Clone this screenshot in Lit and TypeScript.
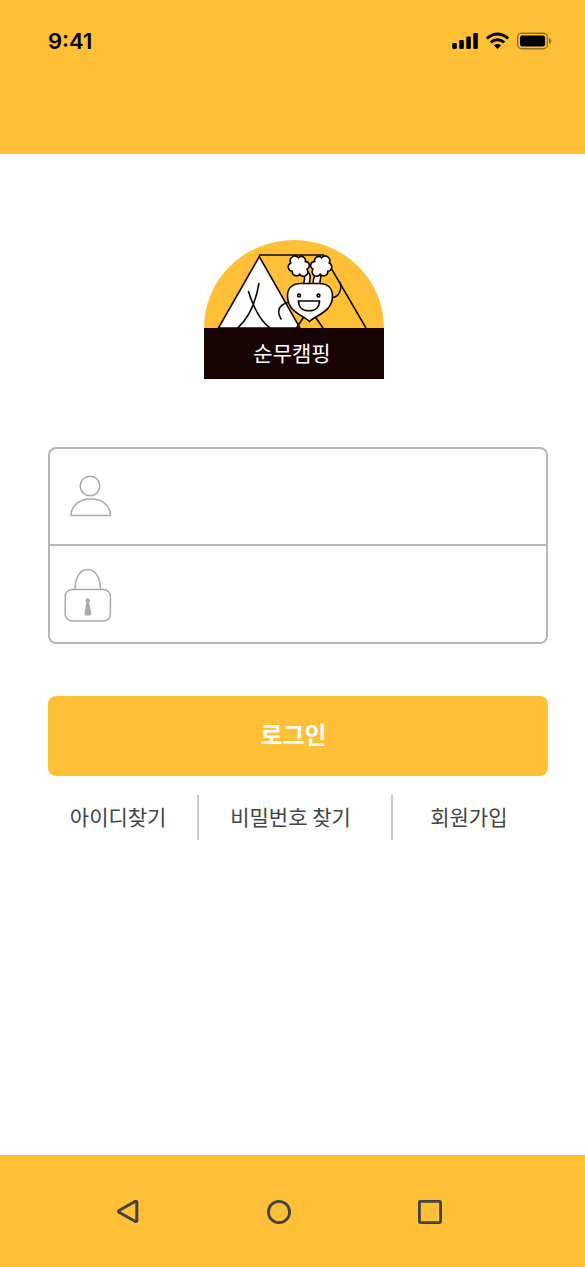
import { LitElement, html, css, svg } from "lit";
import { customElement } from "lit/decorators.js";

const puff = svg`<path d="M-8.200 -3A4.700 4.700 0 0 1 -.5 -8.300A4 4 0 0 1 6.300 -4.600A4.100 4.100 0 0 1 8 3.200A4.300 4.300 0 0 1 .8 8.300A4.300 4.300 0 0 1 -6.800 5.200A4.300 4.300 0 0 1 -8.200 -3Z"/>`;

@customElement("camp-logo")
export class CampLogo extends LitElement {
  static styles = css`
    :host { display: block; width: 180px; }
    .art { display: block; width: 100%; height: 88px; }
    .name {
      margin: 0;
      height: 51px;
      background: #170403;
      color: #fff;
      text-align: center;
      font-size: 21px;
      font-weight: 400;
      line-height: 48px;
      padding-right: 4px;
    }
  `;

  render() {
    return html`
      <svg class="art" viewBox="0 0 180 88" aria-hidden="true" fill="none" stroke="#0b0500" stroke-width="1.6">
        <path d="M0 88A90 88 0 0 1 180 88Z" fill="#ffc038" stroke="none" />
        <path d="M55 15H119.500L162 88" />
        <path d="M14.500 88L55.300 16.500L96 88Z" fill="#fff" />
        <path d="M55 43C52 61 46 77 33.500 88M44.300 51C49 66 55 80 66 88" />
        <path d="M100 76.500L92.500 88M111 76.500L119 88" />
        <path d="M84 62.500C74 65 72.500 72 77.500 79.500M128.500 57.500C135 57 139 48 135.500 41.500" />
        <path d="M99.500 45Q101 39 100.500 33L104 32Q107 35 106 39L105 45ZM109 45Q109 39 111 35L112 32H117Q117 38 115.500 45Z" fill="#fff" />
        <g fill="#fff">
          <g transform="translate(95 26)">${puff}</g>
          <g transform="translate(117 26) scale(-1 1)">${puff}</g>
        </g>
        <path d="M105.500 81.500C99 75 83.500 72 83.500 56C83.500 47.500 89 43.500 97 43.500H115C123 43.500 128.500 47.500 128.500 56C128.500 72 112 75 105.500 81.500Z" fill="#fff" />
        <circle cx="95" cy="55.500" r="1.400" /><circle cx="114.500" cy="55.500" r="1.400" />
        <path d="M94.500 61H115.500C115.500 67 111.500 70.800 105 70.800C98.500 70.800 94.500 67 94.500 61Z" />
      </svg>
      <h1 class="name">순무캠핑</h1>
    `;
  }
}

@customElement("app-root")
export class AppRoot extends LitElement {
  static styles = css`
    * { box-sizing: border-box; }
    :host {
      display: flex;
      flex-direction: column;
      min-height: 100vh;
      background: #fff;
      font-family: "Noto Sans CJK KR", sans-serif;
    }
    svg { display: block; }
    .top { background: #ffc038; height: 154px; padding: 28px 33px 0 48px; }
    .status { display: flex; align-items: center; justify-content: space-between; height: 26px; }
    .time { font: 600 22px/28px Inter, sans-serif; color: #000; }
    .main { flex: 1; padding: 86px 37px 0 48px; }
    .brand { display: flex; justify-content: center; padding-right: 8px; }
    .fields { margin-top: 68px; border: 2px solid #b3b7b5; border-radius: 8px; }
    .field { display: flex; align-items: center; height: 95px; }
    .field + .field { border-top: 2px solid #b3b7b5; height: 98px; }
    .icon { width: 48px; margin-left: 14px; flex: none; }
    .input {
      flex: 1;
      min-width: 0;
      height: 100%;
      border: 0;
      outline: 0;
      background: transparent;
      padding: 0 16px;
      font: inherit;
      font-size: 21px;
      color: #434343;
    }
    .login {
      display: block;
      width: 100%;
      height: 80px;
      margin-top: 52px;
      padding: 0 9px 6px 0;
      border: 0;
      border-radius: 8px;
      background: #ffc038;
      color: #fff;
      font: inherit;
      font-size: 24px;
      font-weight: 700;
      cursor: pointer;
    }
    .links { display: grid; grid-template-columns: 151fr 193fr 155fr; margin-top: 19px; }
    .link {
      height: 45px;
      padding-right: 9px;
      line-height: 42px;
      text-align: center;
      font-size: 21px;
      color: #434343;
      text-decoration: none;
      white-space: nowrap;
    }
    .link:not(:last-child) { border-right: 2px solid #c6c6c6; }
    .link:last-child { padding-right: 3px; }
    .nav {
      display: flex;
      justify-content: center;
      align-items: center;
      gap: 127px;
      height: 112px;
      padding: 2px 28px 0 0;
      background: #ffc038;
    }
    .key { width: 24px; height: 24px; padding: 0; border: 0; background: none; cursor: pointer; }
  `;

  render() {
    return html`
      <header class="top">
        <div class="status">
          <span class="time">9:41</span>
          <svg width="100" height="18" viewBox="0 0 100 18" aria-hidden="true">
            <rect x="0.300" y="11" width="4.500" height="6" rx="1.200" />
            <rect x="7.300" y="8" width="4.500" height="9" rx="1.200" />
            <rect x="14.300" y="4.500" width="4.500" height="12.500" rx="1.200" />
            <rect x="21.300" y="1" width="4.500" height="16" rx="1.200" />
            <path d="M34.800 6.300Q45.500 -2.500 56.200 6.300M38.800 10.400Q45.500 5 52.200 10.400" fill="none" stroke="#000" stroke-width="2.900" />
            <path d="M41.800 13.300Q45.500 10.600 49.200 13.300L45.500 17Z" />
            <rect x="65.700" y="1.200" width="29.600" height="15.600" rx="4" fill="none" stroke="#000" stroke-opacity=".42" stroke-width="1.400" />
            <rect x="68" y="3.500" width="25" height="11" rx="2.200" />
            <path d="M97 6.300Q99.300 7 99.300 9Q99.300 11 97 11.700Z" fill-opacity=".45" />
          </svg>
        </div>
      </header>

      <main class="main">
        <div class="brand"><camp-logo></camp-logo></div>
        <form @submit=${(e: Event) => e.preventDefault()}>
          <div class="fields">
            <div class="field">
              <label class="icon" for="user" aria-label="아이디">
                <svg width="48" height="56" viewBox="0 0 48 56" fill="none" stroke="#a7acaa" stroke-width="1.500">
                  <circle cx="26" cy="17" r="9.800" />
                  <path d="M7 46.500C7 36 16 30 26.800 30S46.500 36 46.500 46.500Z" />
                </svg>
              </label>
              <input class="input" id="user" type="text" autocomplete="username" />
            </div>
            <div class="field">
              <label class="icon" for="pass" aria-label="비밀번호">
                <svg width="48" height="56" viewBox="0 0 48 56" fill="none" stroke="#a7acaa" stroke-width="1.500">
                  <path d="M11 23C11 12 16 3.500 23.700 3.500S36.500 12 36.500 23" />
                  <rect x="1.200" y="23.500" width="45.200" height="31.500" rx="7" />
                  <path d="M22.300 36.200A2.200 2.200 0 1 1 25.100 36.200L27.300 48Q27.300 49.500 25.800 49.500H21.800Q20.200 49.500 20.400 48Z" fill="#a7acaa" stroke="none" />
                </svg>
              </label>
              <input class="input" id="pass" type="password" autocomplete="current-password" />
            </div>
          </div>
          <button class="login" type="submit">로그인</button>
        </form>
        <div class="links">
          <a class="link" href="#find-id">아이디찾기</a>
          <a class="link" href="#find-password">비밀번호 찾기</a>
          <a class="link" href="#join">회원가입</a>
        </div>
      </main>

      <nav class="nav">
        <button class="key" aria-label="뒤로">
          <svg width="24" height="24" fill="none" stroke="#434343" stroke-width="3" stroke-linejoin="round"><path d="M2.500 11.300Q2.500 10.800 3 10.500L19 1.500Q20.800 .8 20.800 2.500V20.500Q20.800 22 19 21.300L3 12.300Q2.500 12 2.500 11.300Z" /></svg>
        </button>
        <button class="key" aria-label="홈">
          <svg width="24" height="24" fill="none" stroke="#434343" stroke-width="2.800"><circle cx="12" cy="12" r="10.600" /></svg>
        </button>
        <button class="key" aria-label="최근 앱">
          <svg width="24" height="24" fill="none" stroke="#434343" stroke-width="2.800"><rect x="1.400" y="1.400" width="21.200" height="21.200" rx="1" /></svg>
        </button>
      </nav>
    `;
  }
}
